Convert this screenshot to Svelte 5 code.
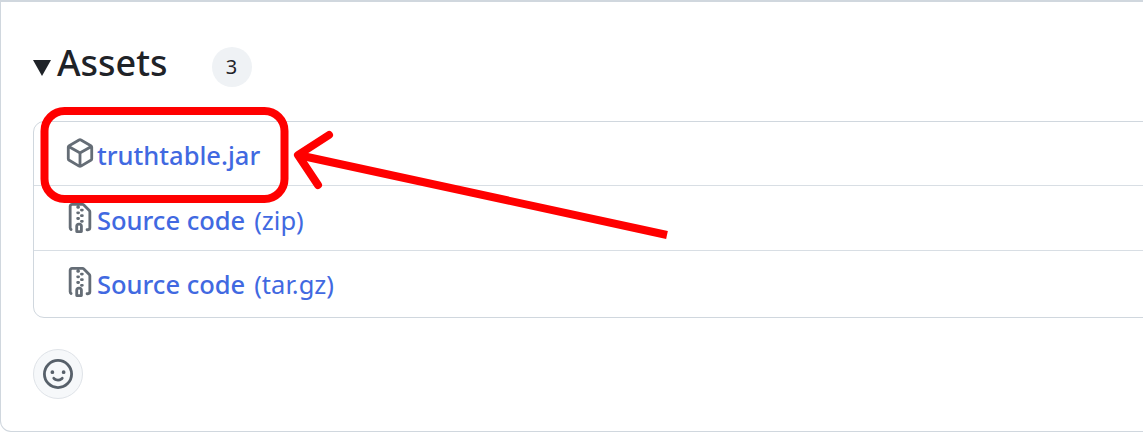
<script>
  const assets = [
    { icon: 'package', name: 'truthtable.jar' },
    { icon: 'zip', name: 'Source code', suffix: '(zip)' },
    { icon: 'zip', name: 'Source code', suffix: '(tar.gz)' }
  ]

  const paths = {
    package: 'm8.878.392 5.25 3.045c.54.314.872.89.872 1.514v6.098a1.75 1.75 0 0 1-.872 1.514l-5.25 3.045a1.75 1.75 0 0 1-1.756 0l-5.25-3.045A1.75 1.75 0 0 1 1 11.049V4.951c0-.624.332-1.201.872-1.514L7.122.392a1.75 1.75 0 0 1 1.756 0ZM7.875 1.69l-4.63 2.685L8 7.133l4.755-2.758-4.63-2.685a.248.248 0 0 0-.25 0ZM2.5 5.677v5.372c0 .09.047.171.125.216l4.625 2.683V8.432Zm6.25 8.271 4.625-2.683a.25.25 0 0 0 .125-.216V5.677L8.75 8.432Z',
    zip: 'M3.5 1.75v11.5c0 .09.048.173.126.217a.75.75 0 0 1-.752 1.298A1.748 1.748 0 0 1 2 13.25V1.75C2 .784 2.784 0 3.75 0h5.586c.464 0 .909.185 1.237.513l2.914 2.914c.329.328.513.773.513 1.237v8.586A1.75 1.75 0 0 1 12.25 15h-.5a.75.75 0 0 1 0-1.5h.5a.25.25 0 0 0 .25-.25V4.664a.25.25 0 0 0-.073-.177L9.513 1.573a.25.25 0 0 0-.177-.073H7.25a.75.75 0 0 1 0 1.5h-.5a.75.75 0 0 1 0-1.5h-3a.25.25 0 0 0-.25.25Zm3.75 8.75h.5c.966 0 1.75.784 1.75 1.75v3a.75.75 0 0 1-.75.75h-2.5a.75.75 0 0 1-.75-.75v-3c0-.966.784-1.75 1.75-1.75ZM6 5.25a.75.75 0 0 1 .75-.75h.5a.75.75 0 0 1 0 1.5h-.5A.75.75 0 0 1 6 5.25Zm.75 2.25h.5a.75.75 0 0 1 0 1.5h-.5a.75.75 0 0 1 0-1.5ZM8 6.75A.75.75 0 0 1 8.75 6h.5a.75.75 0 0 1 0 1.5h-.5A.75.75 0 0 1 8 6.75ZM8.75 3h.5a.75.75 0 0 1 0 1.5h-.5a.75.75 0 0 1 0-1.5ZM8 9.75A.75.75 0 0 1 8.75 9h.5a.75.75 0 0 1 0 1.5h-.5A.75.75 0 0 1 8 9.75Zm-1 2.5v2.25h1v-2.25a.25.25 0 0 0-.25-.25h-.5a.25.25 0 0 0-.25.25Z',
    smiley: 'M8 0a8 8 0 1 1 0 16A8 8 0 0 1 8 0ZM1.5 8a6.5 6.5 0 1 0 13 0 6.5 6.5 0 0 0-13 0Zm3.82 1.636a.75.75 0 0 1 1.038.175l.007.009c.103.118.22.222.35.31.264.178.683.37 1.285.37.602 0 1.02-.192 1.285-.371.13-.088.247-.192.35-.31l.007-.008a.75.75 0 0 1 1.222.87l-.022-.015c.02.013.021.015.021.015v.001l-.001.002-.002.003-.005.007-.014.019a2.066 2.066 0 0 1-.184.213c-.16.166-.338.316-.53.445-.63.418-1.37.638-2.127.629-.946 0-1.652-.308-2.126-.63a3.331 3.331 0 0 1-.715-.657l-.014-.02-.005-.006-.002-.003v-.002h-.001l.613-.432-.614.43a.75.75 0 0 1 .183-1.044ZM12 7a1 1 0 1 1-2 0 1 1 0 0 1 2 0ZM5 8a1 1 0 1 1 0-2 1 1 0 0 1 0 2Zm5.25 2.25.592.416a97.71 97.71 0 0 0-.592-.416Z'
  }
</script>

<div class="page">
  <section class="card">
    <div class="summary">
      <span class="caret"></span>
      <h3>Assets</h3>
      <span class="count">3</span>
    </div>

    <ul class="assets">
      {#each assets as a}
        <li>
          <svg class="icon" viewBox="0 0 16 16" aria-hidden="true"><path d={paths[a.icon]} /></svg>
          <a href="#asset"><span class="name">{a.name}</span>{#if a.suffix}<span class="suffix">{a.suffix}</span>{/if}</a>
        </li>
      {/each}
    </ul>

    <button class="react" aria-label="Add reaction">
      <svg class="icon" viewBox="0 0 16 16" aria-hidden="true"><path d={paths.smiley} /></svg>
    </button>
  </section>

  <!-- annotation drawn on top of the screenshot -->
  <svg class="markup" width="1143" height="435" viewBox="0 0 1143 435" aria-hidden="true">
    <rect x="44.5" y="111" width="240" height="88" rx="20" />
    <path d="M667 235 L298 155" />
    <path class="head" d="M329 135 L298 155 L318 185" />
  </svg>
</div>

<style>
  :global(body) {
    margin: 0;
    background: #fff;
  }
  .page {
    position: relative;
    width: 1143px;
    height: 435px;
    overflow: hidden;
    font-family: "Noto Sans", "Open Sans", sans-serif;
  }
  .card {
    box-sizing: border-box;
    width: 1300px;
    height: 432px;
    padding: 0 32px;
    background: #fff;
    border: 1px solid #d0d7de;
    border-top-width: 2px;
    border-top-left-radius: 0;
    border-bottom-left-radius: 11px;
  }
  .summary {
    display: flex;
    align-items: center;
    height: 119px;
    box-sizing: border-box;
  }
  .caret {
    width: 0;
    height: 0;
    margin-top: 12px;
    border-left: 9px solid transparent;
    border-right: 9px solid transparent;
    border-top: 16px solid #1f2328;
  }
  h3 {
    margin: 2px 0 0 6px;
    font-size: 36px;
    font-weight: 500;
    line-height: 1.25;
    color: #1f2328;
  }
  .count {
    display: flex;
    align-items: center;
    justify-content: center;
    width: 40px;
    height: 40px;
    margin-left: 44px;
    margin-top: 10px;
    border-radius: 50%;
    background: #eff2f5;
    color: #1f2328;
    font-size: 20px;
  }
  .assets {
    margin: 0;
    padding: 0;
    list-style: none;
    border: 1px solid #d0d7de;
    border-radius: 11px;
  }
  li {
    display: flex;
    align-items: center;
    box-sizing: border-box;
    height: 65px;
    padding-left: 31px;
    border-top: 1px solid #d8dee4;
  }
  li:first-child {
    height: 63px;
    padding-bottom: 2px;
    border-top: 0;
  }
  li:last-child {
    height: 67px;
    padding-bottom: 4px;
  }
  .icon {
    width: 30px;
    height: 30px;
    fill: #656d76;
    flex: 0 0 auto;
  }
  a {
    margin-left: 2px;
    padding-top: 4px;
    color: #4169e1;
    font-size: 25.5px;
    text-decoration: none;
    white-space: nowrap;
  }
  .name {
    font-weight: 500;
  }
  .suffix {
    margin-left: 9px;
    font-weight: 400;
  }
  .react {
    display: flex;
    align-items: center;
    justify-content: center;
    width: 50px;
    height: 50px;
    margin-top: 31px;
    padding: 0;
    border: 1px solid #dfe3e8;
    border-radius: 50%;
    background: #f6f8fa;
  }
  .react .icon {
    fill: #57606a;
  }
  .markup {
    position: absolute;
    left: 0;
    top: 0;
    fill: none;
    stroke: #ff0000;
    stroke-width: 8;
  }
  .head {
    stroke-linecap: round;
    stroke-linejoin: round;
  }
</style>
